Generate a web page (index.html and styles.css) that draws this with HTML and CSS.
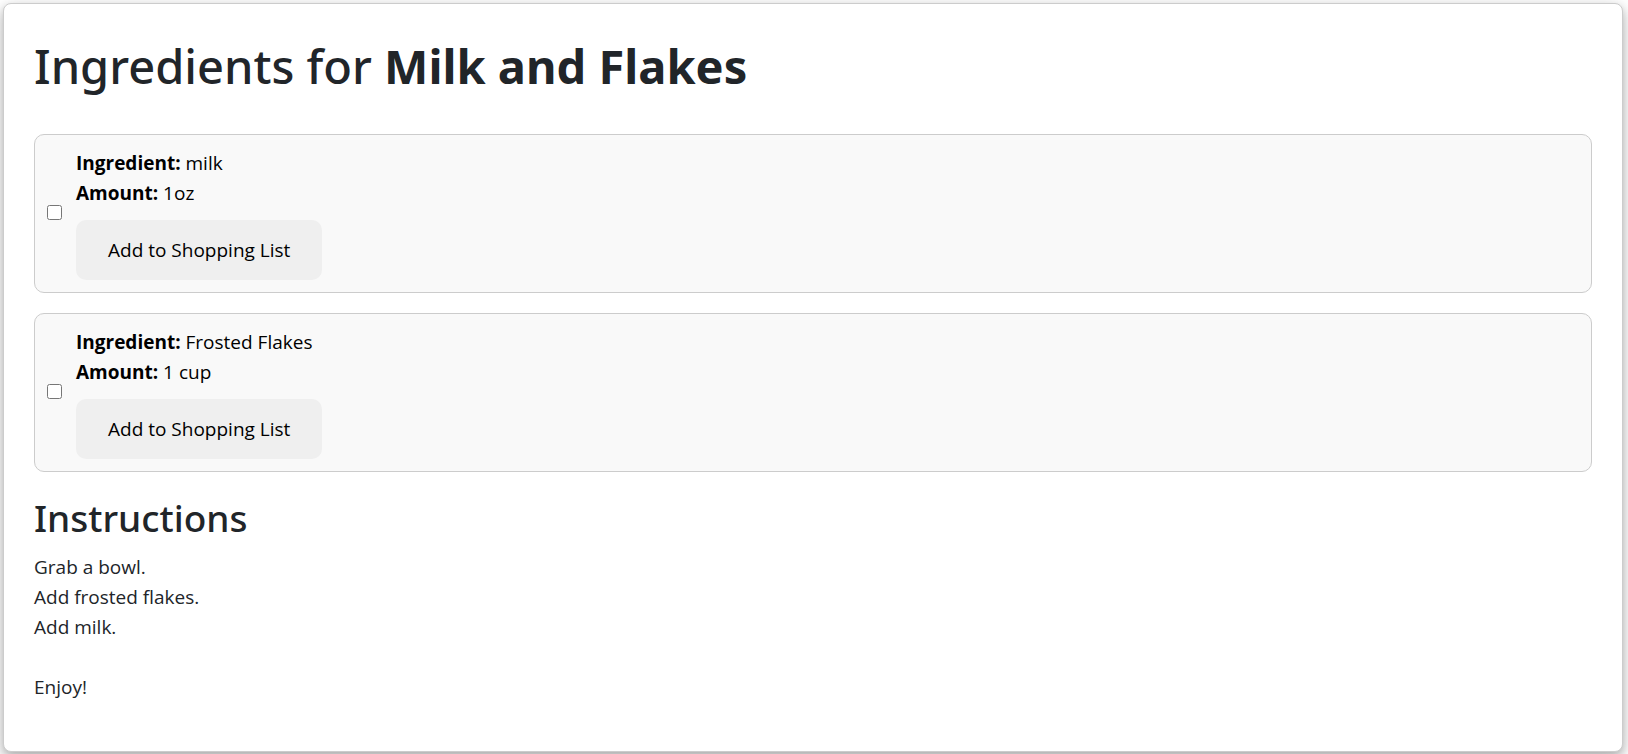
FILE: index.html
```html
<!DOCTYPE html>
<html lang="en">
<head>
<meta charset="utf-8">
<title>Milk and Flakes</title>
<link rel="stylesheet" href="styles.css">
</head>
<body>
<main class="recipe-card">
  <h1 class="recipe-title">Ingredients for <strong>Milk and Flakes</strong></h1>
  <ul class="ingredient-list">
    <li class="ingredient">
      <input class="ingredient-check" type="checkbox" id="milk">
      <div class="ingredient-body">
        <label class="ingredient-label" for="milk"><strong>Ingredient:</strong> milk<br><strong>Amount:</strong> 1oz</label>
        <button class="add-button" type="button">Add to Shopping List</button>
      </div>
    </li>
    <li class="ingredient">
      <input class="ingredient-check" type="checkbox" id="flakes">
      <div class="ingredient-body">
        <label class="ingredient-label" for="flakes"><strong>Ingredient:</strong> Frosted Flakes<br><strong>Amount:</strong> 1 cup</label>
        <button class="add-button" type="button">Add to Shopping List</button>
      </div>
    </li>
  </ul>
  <h2 class="section-title">Instructions</h2>
  <p class="instructions">Grab a bowl.<br>Add frosted flakes.<br>Add milk.<br><br>Enjoy!</p>
</main>
</body>
</html>
```
FILE: styles.css
```css
* {
  box-sizing: border-box;
}

body {
  margin: 0;
  padding: 3px 5px 3px 3px;
  background: #fff;
  color: #212529;
  font: 19px/30px "Segoe UI", "Open Sans", "Noto Sans", sans-serif;
}

.recipe-card {
  padding: 32px 30px 30px;
  border: 1px solid #ccc;
  border-radius: 8px;
  background: #fff;
  box-shadow: 0 4px 8px rgba(0, 0, 0, 0.2), 0 6px 20px rgba(0, 0, 0, 0.19);
}

.recipe-title,
.section-title {
  font-family: "Segoe UI", "Noto Sans", sans-serif;
  font-weight: 500;
}

.recipe-title {
  margin: 0 0 38px;
  font-size: 47px;
  line-height: 60px;
}

.recipe-title strong {
  font-weight: 700;
}

.ingredient-list {
  display: grid;
  gap: 20px;
  margin: 0 0 22px;
  padding: 0;
  list-style: none;
}

.ingredient {
  display: flex;
  align-items: center;
  padding: 13px 12px 12px;
  border: 1px solid #ccc;
  border-radius: 10px;
  background: #f9f9f9;
  color: #000;
}

.ingredient-check {
  flex: none;
  width: 15px;
  height: 15px;
  margin: 0 14px 3px 0;
}

.ingredient-body {
  display: flex;
  flex-direction: column;
  align-items: flex-start;
  gap: 12px;
}

.add-button {
  padding: 15px 32px;
  border: 0;
  border-radius: 10px;
  background: #efefef;
  color: #000;
  font: inherit;
}

.section-title {
  margin: 0 0 10px;
  font-size: 37px;
  line-height: 48px;
}

.instructions {
  margin: 0 0 19px;
}
```
